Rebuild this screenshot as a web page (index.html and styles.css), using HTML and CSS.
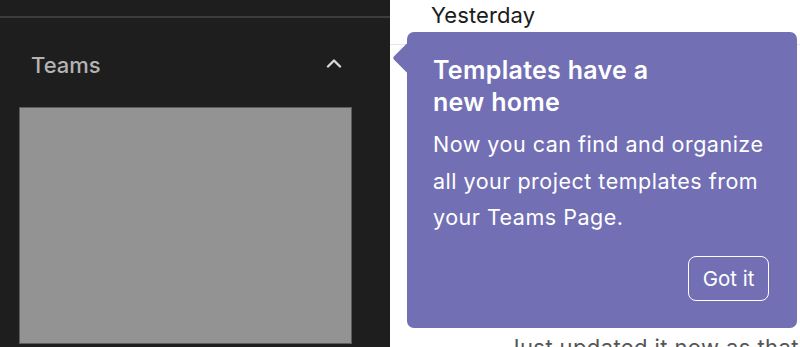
FILE: index.html
```html
<!DOCTYPE html>
<html>
<head>
<meta charset="utf-8">
<link rel="stylesheet" href="styles.css">
</head>
<body>
<div class="app">
  <aside class="sidebar">
    <div class="topline"></div>
    <div class="section-head">
      <span class="section-title">Teams</span>
      <span class="chev"><svg width="16" height="10" viewBox="0 0 16 10"><path d="M2 8.5 L8 2.5 L14 8.5" fill="none" stroke="#d8d8d8" stroke-width="2.4" stroke-linecap="round" stroke-linejoin="round"/></svg></span>
    </div>
    <div class="placeholder"></div>
  </aside>
  <main class="main">
    <div class="day">Yesterday</div>
    <div class="divider"></div>
    <div class="feed">
      <p class="line">Just updated it now as that</p>
    </div>
    <div class="tooltip">
      <div class="arrow"></div>
      <h2 class="tt-title">Templates have a<br>new home</h2>
      <p class="tt-body">Now you can find and organize all your project templates from your Teams Page.</p>
      <div class="tt-actions"><button class="tt-btn">Got it</button></div>
    </div>
  </main>
</div>
</body>
</html>
```
FILE: styles.css
```css
* { box-sizing: border-box; }
html, body { margin: 0; padding: 0; }
body {
  width: 800px;
  height: 347px;
  overflow: hidden;
  font-family: Inter, "Noto Sans", sans-serif;
  background: #ffffff;
}
.app {
  display: flex;
  height: 347px;
}
.sidebar {
  width: 390px;
  flex: none;
  background: #1e1e1e;
  display: flex;
  flex-direction: column;
}
.topline {
  margin-top: 16px;
  height: 2px;
  background: #3c3c3c;
}
.section-head {
  display: flex;
  justify-content: space-between;
  align-items: flex-start;
  padding: 34px 48px 0 31px;
  height: 89px;
}
.section-title {
  font-size: 22px;
  line-height: 26px;
  color: #b3b3b3;
  font-weight: 500;
}
.chev {
  display: block;
  margin-top: 6px;
  width: 16px;
  height: 10px;
}
.chev svg { display: block; }
.placeholder {
  margin-left: 19px;
  width: 333px;
  height: 237px;
  background: #939393;
  border: 1px solid #5c5c5c;
}
.main {
  flex: 1;
  position: relative;
  overflow: hidden;
}
.day {
  padding: 2px 0 0 41px;
  font-size: 22px;
  line-height: 26px;
  letter-spacing: 0.1px;
  color: #1b1b1b;
}
.divider {
  margin-top: 16px;
  height: 1px;
  background: #e4e3f3;
}
.feed {
  padding-left: 117px;
  margin-top: 289px;
}
.line {
  margin: 0;
  font-size: 22px;
  line-height: 26px;
  letter-spacing: 0.4px;
  color: #555;
  white-space: nowrap;
}
.tooltip {
  position: absolute;
  left: 17px;
  top: 32px;
  width: 390px;
  height: 296px;
  background: #726fb4;
  border-radius: 7px;
  padding: 22px 26px 0 26px;
  color: #ffffff;
}
.arrow {
  position: absolute;
  left: -10px;
  top: 15px;
  width: 22px;
  height: 22px;
  background: #726fb4;
  transform: rotate(45deg);
  border-radius: 2px;
}
.tt-title {
  position: relative;
  margin: 0;
  font-size: 25px;
  line-height: 32px;
  font-weight: 600;
  letter-spacing: 0.3px;
}
.tt-body {
  margin: 8px 0 0 0;
  font-size: 21.5px;
  line-height: 36.5px;
  letter-spacing: 0.5px;
  font-weight: 400;
  max-width: 340px;
}
.tt-actions {
  display: flex;
  justify-content: flex-end;
  margin-top: 20px;
  padding-right: 2px;
}
.tt-btn {
  width: 81px;
  height: 45px;
  background: transparent;
  border: 1.5px solid #ffffff;
  border-radius: 8px;
  color: #ffffff;
  font-family: Inter, "Noto Sans", sans-serif;
  font-size: 20.5px;
  padding: 0;
}
```
